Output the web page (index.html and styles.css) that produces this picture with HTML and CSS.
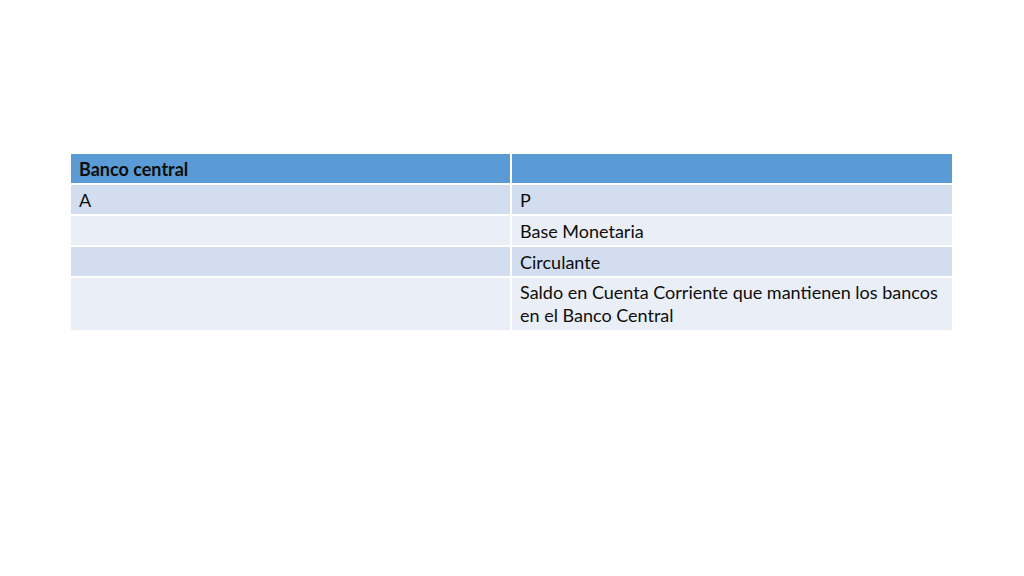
FILE: index.html
```html
<!DOCTYPE html>
<html lang="es">
<head>
<meta charset="utf-8">
<link rel="stylesheet" href="styles.css">
</head>
<body>
<div class="slide">
  <div class="tbl">
    <div class="cell head">Banco central</div>
    <div class="cell head"></div>
    <div class="cell odd">A</div>
    <div class="cell odd">P</div>
    <div class="cell even"></div>
    <div class="cell even">Base Monetaria</div>
    <div class="cell odd"></div>
    <div class="cell odd">Circulante</div>
    <div class="cell even tall"></div>
    <div class="cell even tall">Saldo en Cuenta Corriente que mantienen los bancos en el Banco Central</div>
  </div>
</div>
</body>
</html>
```
FILE: styles.css
```css
html, body {
  margin: 0;
  padding: 0;
  background: #ffffff;
}
.slide {
  width: 1024px;
  height: 576px;
  padding: 154px 0 0 71px;
  box-sizing: border-box;
  font-family: "Lato", "Open Sans", sans-serif;
  font-size: 18px;
  color: #0d0d0d;
}
.tbl {
  width: 881px;
  display: grid;
  grid-template-columns: 439px 440px;
  column-gap: 2px;
  row-gap: 2px;
}
.cell {
  padding: 4px 6px 3px 8px;
  line-height: 22px;
  min-height: 22px;
}
.tall {
  line-height: 23px;
  padding-top: 3px;
  padding-bottom: 3px;
}
.head {
  background: #5b9bd5;
  font-weight: bold;
}
.odd {
  background: #d2deef;
}
.even {
  background: #eaeff7;
}
```
